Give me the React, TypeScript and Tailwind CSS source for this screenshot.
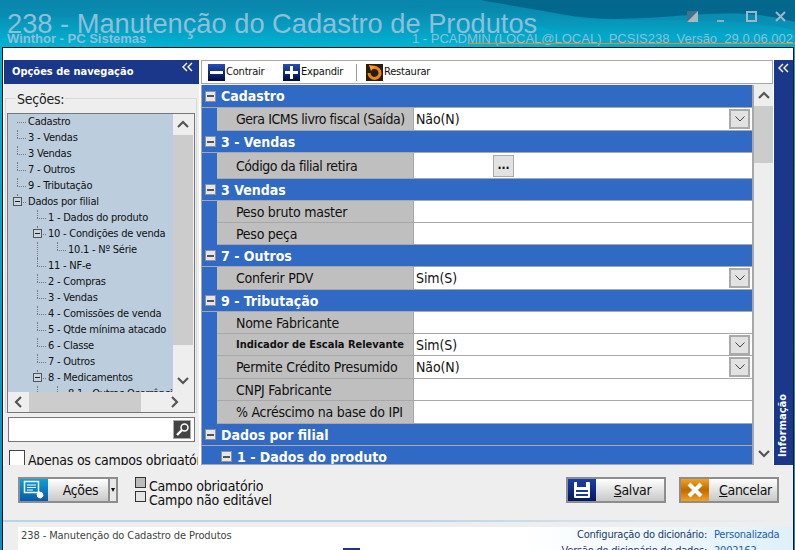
import { ReactNode } from 'react';

const uiFont = "[font-family:'DejaVu_Sans_Condensed','DejaVu_Sans',sans-serif]";

const Chevrons = () => (
  <svg width="11" height="10" viewBox="0 0 11 10" fill="none" stroke="#fff" strokeWidth="1.4">
    <path d="M5 1 1 5l4 4M10 1 6 5l4 4" />
  </svg>
);

const ScrollArrow = ({ dir }: { dir: 'up' | 'down' | 'left' | 'right' }) => {
  const paths = {
    up: 'M2 9l5-5 5 5',
    down: 'M2 5l5 5 5-5',
    left: 'M9 2 4 7l5 5',
    right: 'M5 2l5 5-5 5',
  };
  return (
    <svg width="14" height="14" viewBox="0 0 14 14" fill="none" stroke="#555" strokeWidth="2.2">
      <path d={paths[dir]} />
    </svg>
  );
};

const NavyIcon = ({ plus }: { plus?: boolean }) => (
  <svg width="17" height="17" viewBox="0 0 17 17">
    <defs>
      <linearGradient id="navy" x1="0" y1="0" x2="0" y2="1">
        <stop offset="0" stopColor="#2a4fb0" />
        <stop offset="0.55" stopColor="#0c2a80" />
        <stop offset="1" stopColor="#020a35" />
      </linearGradient>
    </defs>
    <rect width="17" height="17" fill="url(#navy)" />
    <rect x="2" y="7" width="13" height="3" fill="#fff" />
    {plus && <rect x="7" y="2" width="3" height="13" fill="#fff" />}
  </svg>
);

const RestoreIcon = () => (
  <svg width="17" height="17" viewBox="0 0 17 17">
    <rect width="17" height="17" fill="#2c1c0c" />
    <path d="M6 4a5.5 5.5 0 1 1-3 5" fill="none" stroke="#e8851c" strokeWidth="3" />
    <path d="M3 1l6 1-4 5z" fill="#f5a030" />
  </svg>
);

const MinusBox = () => (
  <span className="flex h-[11px] w-[11px] shrink-0 items-center justify-center border border-[#8a8f9a] bg-[#e6e6e6]">
    <span className="h-[2px] w-[7px] bg-[#555]" />
  </span>
);

const TreeMinus = () => (
  <span className="flex h-[9px] w-[9px] items-center justify-center border border-[#555] bg-[#c8d4e0]">
    <span className="h-px w-[5px] bg-[#222]" />
  </span>
);

type TreeItem = { label: string; level: number; box?: boolean; first?: boolean };

const treeItems: TreeItem[] = [
  { label: 'Cadastro', level: 0, first: true },
  { label: '3 - Vendas', level: 0 },
  { label: '3 Vendas', level: 0 },
  { label: '7 - Outros', level: 0 },
  { label: '9 - Tributação', level: 0 },
  { label: 'Dados por filial', level: 0, box: true },
  { label: '1 - Dados do produto', level: 1 },
  { label: '10 - Condições de venda', level: 1, box: true },
  { label: '10.1 - Nº Série', level: 2 },
  { label: '11 - NF-e', level: 1 },
  { label: '2 - Compras', level: 1 },
  { label: '3 - Vendas', level: 1 },
  { label: '4 - Comissões de venda', level: 1 },
  { label: '5 - Qtde mínima atacado', level: 1 },
  { label: '6 - Classe', level: 1 },
  { label: '7 - Outros', level: 1 },
  { label: '8 - Medicamentos', level: 1, box: true },
  { label: '8.1 - Outras Ocorrências do lote', level: 2 },
];

const TreeRow = ({ item }: { item: TreeItem }) => {
  const cols = [];
  for (let i = 0; i < item.level; i++) {
    cols.push(
      <span key={i} className="relative h-4 w-5 shrink-0">
        {i === 1 && <span className="absolute left-[9px] top-0 h-4 border-l border-dotted border-[#777]" />}
      </span>
    );
  }
  return (
    <div className="flex h-4 items-center whitespace-nowrap text-[11px] leading-4 tracking-[-0.23px] text-[#111]">
      {cols}
      <span className="relative h-4 w-5 shrink-0">
        {!item.first && <span className="absolute left-[9px] top-0 h-2 border-l border-dotted border-[#777]" />}
        <span className="absolute left-[9px] top-2 h-px w-[9px] border-t border-dotted border-[#777]" />
        {item.box && (
          <span className="absolute left-[5px] top-[3px]">
            <TreeMinus />
          </span>
        )}
      </span>
      <span>{item.label}</span>
    </div>
  );
};

const LeftPanel = () => (
  <div className="flex h-[405px] w-[195px] shrink-0 flex-col overflow-hidden bg-[#eeeeee]">
    <div className="flex h-6 shrink-0 items-start justify-between bg-[#1a378a] pr-[6px]">
      <span className="pl-2 pt-[4px] text-[11px] font-bold text-white">Opções de navegação</span>
      <span className="pt-[2px]">
        <Chevrons />
      </span>
    </div>
    <div className="ml-px mt-[14px] flex h-[315px] w-[192px] shrink-0 flex-col border border-[#d8d8d8] px-[1px] pb-[1px]">
      <span className="-mt-[7px] ml-[9px] w-fit bg-[#eeeeee] px-[1px] text-[14px] leading-[15px] tracking-[-0.25px] text-[#222]">Seções:</span>
      <div className="mt-[6px] flex h-[300px] w-[188px] flex-col border border-[#777] bg-[#eeeeee]">
        <div className="flex h-[278px]">
          <div className="w-[165px] overflow-hidden bg-[#bccddd]">
            {treeItems.map((t, i) => (
              <TreeRow key={i} item={t} />
            ))}
          </div>
          <div className="flex w-5 flex-col">
            <span className="flex h-[21px] items-center justify-center">
              <ScrollArrow dir="up" />
            </span>
            <span className="h-[210px] bg-[#cccccc]" />
            <span className="flex flex-1 items-end justify-center pb-[5px]">
              <ScrollArrow dir="down" />
            </span>
          </div>
        </div>
        <div className="flex h-5 items-center">
          <span className="flex w-[21px] justify-center">
            <ScrollArrow dir="left" />
          </span>
          <span className="h-5 w-[112px] bg-[#cccccc]" />
          <span className="flex w-[40px] justify-end">
            <ScrollArrow dir="right" />
          </span>
        </div>
      </div>
    </div>
    <div className="ml-[4px] mt-[4px] flex h-[25px] w-[187px] shrink-0 items-center justify-end border border-[#777] bg-white pr-[3px]">
      <span className="flex h-[19px] w-[18px] items-center justify-center border border-[#aaa] bg-[#444]">
        <svg width="15" height="15" viewBox="0 0 15 15" fill="none" stroke="#fff">
          <circle cx="9.5" cy="5.5" r="3.5" strokeWidth="1.5" />
          <path d="M7 8l-5 5" strokeWidth="2.4" />
        </svg>
      </span>
    </div>
    <div className="ml-[5px] mt-[8px] flex w-[189px] shrink-0 items-start gap-[3px] overflow-hidden">
      <span className="h-[16px] w-[16px] shrink-0 border border-[#444] bg-white" />
      <span className="mt-px whitespace-nowrap text-[14px] leading-[19px] tracking-[-0.25px] text-[#111]">Apenas os campos obrigatórios</span>
    </div>
  </div>
);

const ToolButton = ({ icon, label, width }: { icon: ReactNode; label: string; width: string }) => (
  <span className={`flex items-center gap-px text-[11px] tracking-[-0.2px] text-[#111] ${width}`}>
    {icon}
    {label}
  </span>
);

const Toolbar = () => (
  <div className="flex h-6 items-center border border-[#a8a8a8] bg-white pl-[6px]">
    <ToolButton icon={<NavyIcon />} label="Contrair" width="w-[75px]" />
    <ToolButton icon={<NavyIcon plus />} label="Expandir" width="w-[73px]" />
    <span className="mr-[9px] h-[17px] w-px bg-[#999]" />
    <ToolButton icon={<RestoreIcon />} label="Restaurar" width="w-[80px]" />
  </div>
);

const Section = ({ title, h, sub }: { title: string; h: string; sub?: boolean }) => (
  <div className={`flex items-center gap-[5px] border-b border-[#a8a8a8] bg-[#316ac5] ${h} ${sub ? 'ml-[15px] pl-[4px]' : 'pl-[3px]'}`}>
    <MinusBox />
    <span className="pt-px text-[14px] font-bold text-white">{title}</span>
  </div>
);

const Row = ({
  label,
  value,
  h,
  bold,
  tight,
  combo,
  lookup,
}: {
  label: string;
  value?: string;
  h: string;
  bold?: boolean;
  tight?: boolean;
  combo?: boolean;
  lookup?: boolean;
}) => (
  <div className={`ml-[15px] flex border-b border-[#a8a8a8] ${h}`}>
    <div
      className={`flex w-[197px] shrink-0 items-center whitespace-nowrap border-r border-[#a8a8a8] bg-[#bfbfbf] pl-[19px] pt-px text-[#111] ${
        bold ? 'text-[11px] font-bold' : tight ? 'text-[14px] tracking-[-0.45px]' : 'text-[14px] tracking-[-0.25px]'
      }`}
    >
      {label}
    </div>
    <div className="flex flex-1 items-center bg-white pl-[2px] pr-[2px] text-[14px] tracking-[-0.1px] text-[#111]">
      <span className="flex-1 pt-px">{value}</span>
      {combo && (
        <span className="flex h-5 w-[21px] items-center justify-center border-2 border-[#aaa] bg-[#e2e2e2]">
          <svg width="10" height="6" viewBox="0 0 10 6" fill="none" stroke="#444">
            <path d="M0.5 0.5 5 5l4.5-4.5" />
          </svg>
        </span>
      )}
      {lookup && (
        <>
          <span className="ml-[77px] flex h-[22px] w-[21px] items-start justify-center border border-[#aaa] bg-[#e2e2e2] text-[12px] font-bold leading-[18px]">
            ...
          </span>
          <span className="w-[237px]" />
        </>
      )}
    </div>
  </div>
);

const PropertyGrid = () => (
  <div className="h-[380px] overflow-hidden border-b border-l border-r-2 border-[#a8a8a8] bg-[#316ac5]">
    <Section title="Cadastro" h="h-[23px]" />
    <Row label="Gera ICMS livro fiscal (Saída)" value="Não(N)" h="h-[23px]" tight combo />
    <Section title="3 - Vendas" h="h-[22px]" />
    <Row label="Código da filial retira" h="h-[26px]" tight lookup />
    <Section title="3 Vendas" h="h-[22px]" />
    <Row label="Peso bruto master" h="h-[22px]" />
    <Row label="Peso peça" h="h-[22px]" />
    <Section title="7 - Outros" h="h-[22px]" />
    <Row label="Conferir PDV" value="Sim(S)" h="h-[23px]" combo />
    <Section title="9 - Tributação" h="h-[22px]" />
    <Row label="Nome Fabricante" h="h-[22px]" />
    <Row label="Indicador de Escala Relevante" value="Sim(S)" h="h-[22px]" bold combo />
    <Row label="Permite Crédito Presumido" value="Não(N)" h="h-[23px]" combo />
    <Row label="CNPJ Fabricante" h="h-[22px]" />
    <Row label="% Acréscimo na base do IPI" h="h-[23px]" />
    <Section title="Dados por filial" h="h-[22px]" />
    <Section title="1 - Dados do produto" h="h-[22px]" sub />
  </div>
);

const ActionButton = ({ icon, label, iconBg, width }: { icon: ReactNode; label: ReactNode; iconBg: string; width: string }) => (
  <div className={`flex h-[26px] border-2 border-[#8d8d8d] bg-gradient-to-b from-white to-[#c8c8c8] ${width}`}>
    <span className={`flex w-[28px] shrink-0 items-center justify-center ${iconBg}`}>{icon}</span>
    <span className="flex flex-1 items-center justify-center pl-[5px] pt-px text-[14px] tracking-[-0.35px] text-[#111]">{label}</span>
  </div>
);

const BottomBar = () => (
  <div className="flex h-[55px] items-start justify-between bg-[#eeeeee] pl-[15px] pr-[14px] pt-[12px]">
    <div className="flex items-start">
      <ActionButton
        width="w-[92px]"
        iconBg="bg-gradient-to-b from-[#10a0d8] to-[#0a5aa8]"
        label="Ações"
        icon={
          <svg width="24" height="22" viewBox="0 0 24 22" fill="none" stroke="#fff">
            <rect x="2.5" y="2.5" width="14" height="11" strokeWidth="1.5" />
            <path d="M5 6h9M5 8.5h9M5 11h6" />
            <circle cx="18" cy="16" r="3" fill="#fff" stroke="#fff" strokeDasharray="2 1" />
          </svg>
        }
      />
      <span className="flex h-[26px] w-2 items-center justify-center border-y-2 border-r-2 border-[#8d8d8d] bg-[#e8e8e8]">
        <span className="border-x-[2px] border-t-[4px] border-x-transparent border-t-[#111]" />
      </span>
      <div className="ml-[17px] flex flex-col text-[14px] leading-[14px] tracking-[-0.2px] text-[#111]">
        <div className="flex h-[14px] items-start gap-[3px]">
          <span className="h-[11px] w-[11px] border border-[#333] bg-[#bcbcbc]" />
          <span className="mt-[2px] h-[12px] overflow-hidden">Campo obrigatório</span>
        </div>
        <div className="flex items-start gap-[3px]">
          <span className="h-[11px] w-[11px] border border-[#333] bg-[#e4e4e4]" />
          <span className="mt-[2px]">Campo não editável</span>
        </div>
      </div>
    </div>
    <div className="flex gap-[13px]">
      <ActionButton
        width="w-[100px]"
        iconBg="bg-gradient-to-b from-[#1a3fa8] to-[#041a60]"
        label={
          <>
            <u>S</u>alvar
          </>
        }
        icon={
          <svg width="18" height="18" viewBox="0 0 18 18">
            <rect x="1" y="1" width="16" height="16" rx="1" fill="#fff" />
            <rect x="4" y="1" width="9" height="5" fill="#1a3a90" />
            <rect x="3" y="9" width="12" height="2" fill="#1a3a90" />
            <rect x="3" y="13" width="12" height="2" fill="#1a3a90" />
          </svg>
        }
      />
      <ActionButton
        width="w-[100px]"
        iconBg="bg-gradient-to-b from-[#f5a020] via-[#c06a00] to-[#f5a020]"
        label={
          <>
            <u>C</u>ancelar
          </>
        }
        icon={
          <svg width="18" height="18" viewBox="0 0 18 18" stroke="#fff" strokeWidth="4">
            <path d="M3 3l12 12M15 3 3 15" />
          </svg>
        }
      />
    </div>
  </div>
);

const StatusBar = () => (
  <div className="relative flex h-[23px] bg-[#eeeeee] pl-[15px]">
    <div className="flex flex-1 bg-gradient-to-r from-white via-white via-65% to-[#dff0fa] pl-[3px] pr-[13px]">
      <span className="flex-1 pt-[1px] text-[11px] tracking-[-0.1px] text-[#444]">238 - Manutenção do Cadastro de Produtos</span>
      <div className="w-[240px] overflow-hidden text-[11px] leading-[16px] tracking-[-0.23px]">
        <div className="flex justify-end gap-[7px]">
          <span className="text-[#1a3a70]">Configuração do dicionário:</span>
          <span className="w-[66px] whitespace-nowrap text-[#1a60b0]">Personalizada</span>
        </div>
        <div className="flex justify-end gap-[7px]">
          <span className="whitespace-nowrap text-[#1a3a70]">Versão do dicionário de dados:</span>
          <span className="w-[66px] text-[#1a60b0]">2002162</span>
        </div>
      </div>
    </div>
    <span className="absolute bottom-0 left-[340px] h-[2px] w-[17px] bg-[#1a378a]" />
  </div>
);

const Header = () => (
  <div className="relative h-[47px] overflow-hidden bg-gradient-to-b from-[#0a7fa4] to-[#00b4d4]">
    <svg className="absolute inset-0" width="795" height="47" viewBox="0 0 795 47">
      <path d="M0 0h795v30C700 10 600 30 540 10 500 0 300 10 0 18z" fill="#0a8bb0" opacity="0.6" />
      <path d="M480 0h315v22C720 0 640 30 560 14 530 8 500 4 480 0z" fill="#035f85" opacity="0.8" />
      <path d="M520 20c70 30 180 10 275 15v12H560z" fill="#00a8cc" opacity="0.7" />
    </svg>
    <div className="relative flex h-full flex-col pl-[7px] [font-family:'Liberation_Sans',sans-serif]">
      <div className="flex h-[33px] justify-between">
        <span className="whitespace-nowrap pt-[10px] text-[27.25px] leading-[28px] text-[#8ebfda]">238 - Manutenção do Cadastro de Produtos</span>
        <div className="flex items-start pr-[9px] pt-[11px]">
          <svg width="11" height="11" viewBox="0 0 11 11">
            <rect width="11" height="11" fill="#a8b8c0" />
            <path d="M11 0H0v11z" fill="#44708a" />
          </svg>
          <span className="ml-[19px] mt-[9px] h-[2px] w-[7px] bg-[#8fb0c0]" />
          <span className="ml-[22px] h-[11px] w-[11px] border-2 border-[#9ab8c8]" />
          <svg className="ml-[18px]" width="11" height="11" viewBox="0 0 11 11" stroke="#9ab8c8" strokeWidth="2">
            <path d="M1 1l9 9M10 1l-9 9" />
          </svg>
        </div>
      </div>
      <div className="flex justify-between">
        <span className="-mt-[1px] text-[13px] font-bold leading-[13px] text-[#8ebfda]">Winthor - PC Sistemas</span>
        <span className="-mt-[1px] h-[11px] whitespace-nowrap pr-[2px] text-right text-[13px] leading-[13px] text-[#8ebfda]">
          1 - PCADMIN (LOCAL@LOCAL)&nbsp;&nbsp;PCSIS238&nbsp;&nbsp;Versão&nbsp;&nbsp;29.0.06.002
        </span>
      </div>
    </div>
    <span className="absolute bottom-[3px] right-0 h-px w-[327px] border-t border-[#f08a10]" />
  </div>
);

export default function App() {
  return (
    <div className={`flex h-[550px] w-[795px] flex-col overflow-hidden bg-gradient-to-b from-[#00b4d4] to-[#0a8fc0] ${uiFont}`}>
      <Header />
      <div className="ml-[2px] mr-[1px] flex h-[503px] flex-col border-x border-t border-[#111] bg-white">
        <div className="h-[12px] shrink-0" />
        <div className="flex h-[405px] shrink-0 bg-white pl-px">
          <LeftPanel />
          <div className="ml-[2px] flex w-[572px] flex-col bg-[#eeeeee]">
            <Toolbar />
            <div className="mt-px flex">
              <div className="w-[553px]">
                <PropertyGrid />
              </div>
              <div className="flex h-[380px] w-[19px] flex-col bg-[#eeeeee]">
                <span className="flex h-[21px] items-center justify-center">
                  <ScrollArrow dir="up" />
                </span>
                <span className="h-[57px] bg-[#cccccc]" />
                <span className="flex flex-1 items-end justify-center pb-[5px]">
                  <ScrollArrow dir="down" />
                </span>
              </div>
            </div>
          </div>
          <div className="ml-px flex w-[19px] flex-col items-center justify-between bg-[#1a378a] pb-2 pt-[3px]">
            <Chevrons />
            <span className="rotate-180 text-[11px] font-bold text-white [writing-mode:vertical-rl]">Informação</span>
          </div>
        </div>
        <BottomBar />
        <div className="flex h-[7px] shrink-0 flex-col bg-[#eeeeee]">
          <span className="h-[2px] bg-gradient-to-r from-[#b8d4e8] via-[#b8d4e8] to-[#eeeeee]" />
        </div>
        <StatusBar />
      </div>
    </div>
  );
}
